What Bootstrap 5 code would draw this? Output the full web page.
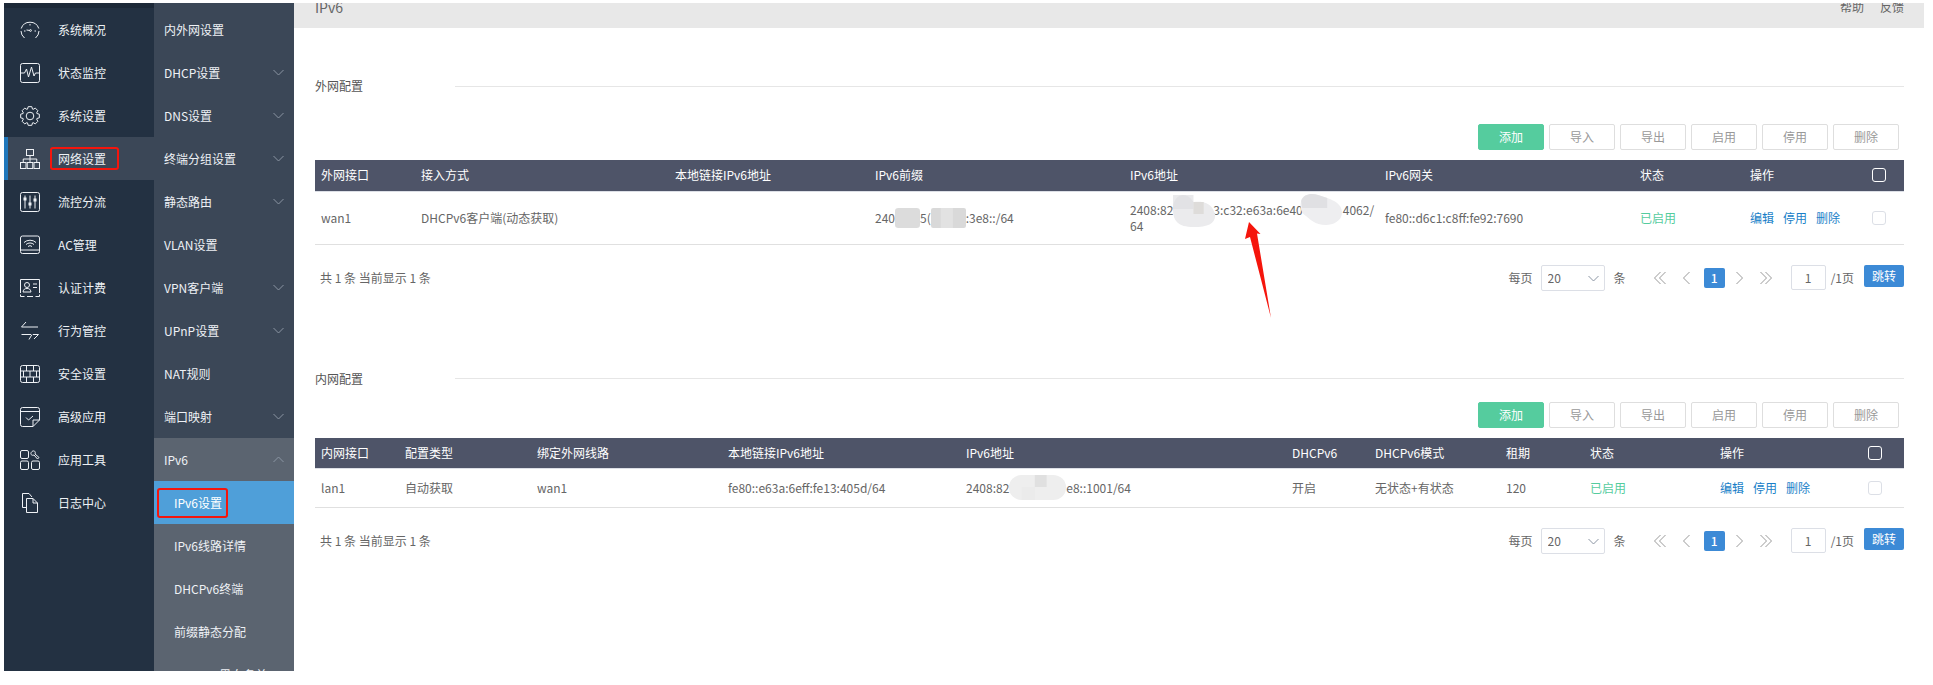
<!DOCTYPE html>
<html lang="zh-CN">
<head>
  <meta charset="UTF-8" />
  <title>IPv6设置</title>
  <link href="https://cdn.jsdelivr.net/npm/bootstrap@5.3.3/dist/css/bootstrap.min.css" rel="stylesheet" />
  <style>
    html, body { height: 685px; overflow: hidden; }
    body { background: #fff; color: #666; font-family: "Noto Sans CJK SC", "Liberation Sans", sans-serif; font-size: 12px; }
    .shell { position: relative; height: 668px; margin: 3px 9px 0 4px; overflow: hidden; }

    /* menus */
    .menu-main { width: 150px; background: #233142; padding-top: 5px; position: relative; }
    .menu-main::before { content: ""; position: absolute; top: 0; left: 0; right: 0; height: 5px; background: #1d2938; }
    .menu-sub { width: 140px; background: #3b4757; padding-top: 5px; }
    .menu-row { height: 43px; color: #eef1f5; font-size: 12px; }
    .menu-main .menu-row { padding-left: 16px; gap: 18px; }
    .menu-main .menu-row.on { background: #3b4757; border-left: 4px solid #1f77bb; padding-left: 12px; }
    .menu-ico { width: 20px; height: 20px; fill: none; stroke: #eef1f5; stroke-width: 1; flex: none; }
    .menu-sub .menu-row { padding: 0 10px 0 10px; }
    .menu-sub .open-head { background: #5b6470; }
    .menu-sub .nested { background: #5b6470; padding-left: 20px; }
    .menu-sub .nested.on { background: #4f9fd9; color: #fff; }
    .chev { width: 11px; height: 7px; fill: none; stroke: #8b95a3; stroke-width: 1; }

    /* content */
    .content { flex: 1; min-width: 0; }
    .top-strip { height: 25px; background: #e8e8e8; padding: 0 20px 0 21px; overflow: hidden; }
    .page-name { font-size: 14px; line-height: 8px; color: #666; }
    .top-links { line-height: 8px; gap: 16px; }
    .pane { padding: 0 20px 0 21px; }
    .sec-head { height: 20px; color: #555; }
    .sec-name { width: 140px; margin-top: -2px; }
    .sec-line { flex: 1; height: 1px; background: #e6e6e6; margin-top: -2px; }
    .sec-a { margin-top: 49px; }
    .sec-b { margin-top: 79px; }
    .tools { gap: 5px; padding-right: 5px; height: 26px; }
    .tools-a { margin-top: 27px; }
    .tools-b { margin-top: 12px; }
    .tool-btn { width: 66px; height: 26px; padding: 0; font-size: 12px; line-height: 24px; border: 1px solid #dedede; border-radius: 2px; background: #fff; color: #999; }
    .tool-btn.go { background: #55cc9e; border-color: #55cc9e; color: #fff; }

    .net-table { table-layout: fixed; width: 1589px; margin: 10px 0 0; font-size: 12px; }
    .net-table th { height: 31px; background: #4e5468; color: #fff; font-weight: 400; padding: 0 6px; vertical-align: middle; border-bottom: 1px solid #dcdfe6; }
    .net-table td { color: #666; padding: 0 6px; vertical-align: middle; border-bottom: 1px solid #e0e0e0; line-height: 16px; white-space: nowrap; }
    .net-table td.state-on { color: #55cc9e; }
    .wan-grid td { height: 53px; }
    .lan-grid td { height: 39px; }
    .wan-grid col:nth-child(1) { width: 100px; }
    .wan-grid col:nth-child(2) { width: 254px; }
    .wan-grid col:nth-child(3) { width: 200px; }
    .wan-grid col:nth-child(4) { width: 255px; }
    .wan-grid col:nth-child(5) { width: 255px; }
    .wan-grid col:nth-child(6) { width: 255px; }
    .wan-grid col:nth-child(7) { width: 110px; }
    .wan-grid col:nth-child(8) { width: 122px; }
    .wan-grid col:nth-child(9) { width: 38px; }
    .lan-grid col:nth-child(1) { width: 84px; }
    .lan-grid col:nth-child(2) { width: 132px; }
    .lan-grid col:nth-child(3) { width: 191px; }
    .lan-grid col:nth-child(4) { width: 238px; }
    .lan-grid col:nth-child(5) { width: 326px; }
    .lan-grid col:nth-child(6) { width: 83px; }
    .lan-grid col:nth-child(7) { width: 131px; }
    .lan-grid col:nth-child(8) { width: 84px; }
    .lan-grid col:nth-child(9) { width: 130px; }
    .lan-grid col:nth-child(10) { width: 148px; }
    .lan-grid col:nth-child(11) { width: 42px; }
    .act-link { color: #1a7fc8; text-decoration: none; margin-right: 9px; }
    .tick { width: 14px; height: 14px; margin: 0; display: block; border: 1px solid #dcdfe6; border-radius: 2px; background: #fff; }
    th .tick { background: transparent; border-color: #fff; }

    /* blurred bits of the addresses */
    .smudge { display: inline-block; position: relative; height: 1px; }
    .smudge svg { position: absolute; left: 0; }
    .gap-a { width: 25px; }
    .gap-a2 { width: 35px; }
    .gap-b { width: 40px; }
    .gap-c { width: 40px; }
    .gap-d { width: 57px; }
    .blot-a { width: 25px; height: 20px; top: -14px; }
    .blot-a2 { width: 35px; height: 20px; top: -14px; }
    .blot-b { width: 43px; height: 32px; top: -19px; }
    .smudge .blot-c { width: 43px; height: 32px; top: -20px; left: -3px; }
    .blot-d { width: 57px; height: 25px; top: -17px; }

    .pager { height: 26px; margin-top: 20px; padding-left: 5px; }
    .pager-tools { color: #666; }
    .size-pick { width: 64px; height: 26px; padding: 0 0 0 6px; font-size: 12px; color: #666; border: 1px solid #dcdfe6; border-radius: 2px; background-image: none; }
    .pick-wrap { position: relative; margin: 0 9px 0 8px; }
    .pick-wrap svg { position: absolute; right: 6px; top: 10px; }
    .pg-ico { fill: none; stroke: #999; stroke-width: 1; height: 14px; }
    .pg-now { width: 21px; height: 20px; line-height: 20px; text-align: center; background: #3c8ad6; color: #fff; border-radius: 2px; margin: 0 11px 0 14px; font-weight: 500; }
    .pg-input { width: 35px; height: 25px; padding: 0; text-align: center; font-size: 12px; color: #666; border: 1px solid #dcdfe6; border-radius: 2px; margin: 0 5px 1px 19px; }
    .jump-btn { width: 40px; height: 22px; padding: 0; margin: 0 0 4px 10px; font-size: 12px; line-height: 22px; background: #3c8ad6; color: #fff; border: 0; border-radius: 2px; }

    /* annotations drawn over the screenshot */
    .mark-box { position: absolute; border: 2.5px solid #f5150c; border-radius: 3px; }
    .mark-net { left: 46px; top: 144px; width: 69px; height: 23px; }
    .mark-v6 { left: 153px; top: 485px; width: 71px; height: 30px; }
    .mark-arrow { position: absolute; left: 1237px; top: 216px; width: 40px; height: 104px; }
  </style>
</head>
<body>
  <div class="shell d-flex">
    <nav class="menu-main flex-shrink-0">
      <div class="menu-row d-flex align-items-center">
        <svg class="menu-ico" viewBox="0 0 20 20"><path d="M4.500 18A9.300 9.300 0 0 1 1 11M1.200 8.500A9.300 9.300 0 0 1 18.800 8.500M19 11A9.300 9.300 0 0 1 15.500 18"/><path d="M10 4v1.500M4 11h1.500M14.500 11H16M10 10.500 6.500 10"/><circle cx="10.500" cy="10.500" r=".9"/></svg>
        <span>系统概况</span>
      </div>
      <div class="menu-row d-flex align-items-center">
        <svg class="menu-ico" viewBox="0 0 20 20"><rect x=".5" y=".5" width="19" height="19" rx="2"/><path d="M1 10h3.500L6.500 6l2 8 3-10 2.500 9 1.500-3H19"/></svg>
        <span>状态监控</span>
      </div>
      <div class="menu-row d-flex align-items-center">
        <svg class="menu-ico" viewBox="-10 -10 20 20"><polygon points="6.86,-2.5 9.33,-1.81 9.33,1.81 6.86,2.5 6.62,3.08 7.88,5.32 5.32,7.88 3.08,6.62 2.5,6.86 1.81,9.33 -1.81,9.33 -2.5,6.86 -3.08,6.62 -5.32,7.88 -7.88,5.32 -6.62,3.08 -6.86,2.5 -9.33,1.81 -9.33,-1.81 -6.86,-2.5 -6.62,-3.08 -7.88,-5.32 -5.32,-7.88 -3.08,-6.62 -2.5,-6.86 -1.81,-9.33 1.81,-9.33 2.5,-6.86 3.08,-6.62 5.32,-7.88 7.88,-5.32 6.62,-3.08"/><circle r="3.800"/></svg>
        <span>系统设置</span>
      </div>
      <div class="menu-row on d-flex align-items-center">
        <svg class="menu-ico" viewBox="0 0 20 20"><rect x="6.500" y=".5" width="7" height="6"/><rect x=".5" y="13.500" width="5.500" height="6"/><rect x="7.250" y="13.500" width="5.500" height="6"/><rect x="14" y="13.500" width="5.500" height="6"/><path d="M10 6.500v7M3.250 13.500V10h13.500v3.500"/></svg>
        <span>网络设置</span>
      </div>
      <div class="menu-row d-flex align-items-center">
        <svg class="menu-ico" viewBox="0 0 20 20"><rect x=".5" y=".5" width="19" height="19" rx="2"/><path d="M5 3.500v13M10 3.500v13M15 3.500v13"/><path d="M3.500 7h3M8.500 12h3M13.500 8h3" stroke-width="3"/></svg>
        <span>流控分流</span>
      </div>
      <div class="menu-row d-flex align-items-center">
        <svg class="menu-ico" viewBox="0 0 20 20"><rect x=".5" y="1" width="19" height="17.500" rx="2"/><path d="M1 15h18M4 7.500a9 9 0 0 1 12 0M6 9.500a6 6 0 0 1 8 0M8 11.500a3 3 0 0 1 4 0"/></svg>
        <span>AC管理</span>
      </div>
      <div class="menu-row d-flex align-items-center">
        <svg class="menu-ico" viewBox="0 0 20 20"><path d="M.5 15V1.500h19V15M.5 16.500v2h4M7 18.500h6M15.500 18.500h4v-2"/><circle cx="7" cy="7" r="2.500"/><path d="M3 14c.5-3 2-3.500 4-3.500s3.500.5 4 3.500zM13 6h4M13 9.500h4"/></svg>
        <span>认证计费</span>
      </div>
      <div class="menu-row d-flex align-items-center">
        <svg class="menu-ico" viewBox="0 0 20 20"><path d="M6 1 1.500 6H18M1.500 13.500H11M13 13.500h5.500L14 18M9 18.500l3-5"/></svg>
        <span>行为管控</span>
      </div>
      <div class="menu-row d-flex align-items-center">
        <svg class="menu-ico" viewBox="0 0 20 20"><rect x=".5" y="1.500" width="19" height="17" rx="2"/><path d="M.5 7h19M.5 13h19M6.500 1.500V7M13.500 1.500V7M3.500 7v6M10 7v6M16.500 7v6M6.500 13v5.500M13.500 13v5.500"/></svg>
        <span>安全设置</span>
      </div>
      <div class="menu-row d-flex align-items-center">
        <svg class="menu-ico" viewBox="0 0 20 20"><path d="M13 19.500H2.500a2 2 0 0 1-2-2V2.500a2 2 0 0 1 2-2h15a2 2 0 0 1 2 2V13zM.5 4.500h19M13 19.500V13h6.500M6 10.500l2.500 2.500 4.500-4"/></svg>
        <span>高级应用</span>
      </div>
      <div class="menu-row d-flex align-items-center">
        <svg class="menu-ico" viewBox="0 0 20 20"><rect x=".5" y=".5" width="8" height="8" rx="1.500"/><rect x=".5" y="11" width="8" height="8.500" rx="1.500"/><rect x="11.500" y="11" width="8" height="8.500" rx="1.500"/><path d="M12 1.500c2-1.500 4 0 3 2.500l4 3.500-1.500 1.500-3.500-4c-2.500 1-4-1-2.500-3z"/></svg>
        <span>应用工具</span>
      </div>
      <div class="menu-row d-flex align-items-center">
        <svg class="menu-ico" viewBox="0 0 20 20"><path d="M7 14.500H2.500V.5H9l3 3.500M6.500 19.500V5.500H13l4.500 4.500v9.500zM13 5.500V10h4.500"/></svg>
        <span>日志中心</span>
      </div>
    </nav>

    <nav class="menu-sub flex-shrink-0">
      <div class="menu-row d-flex align-items-center"><span>内外网设置</span></div>
      <div class="menu-row d-flex align-items-center justify-content-between"><span>DHCP设置</span><svg class="chev" viewBox="0 0 11 7"><path d="m.5 1 5 5 5-5"/></svg></div>
      <div class="menu-row d-flex align-items-center justify-content-between"><span>DNS设置</span><svg class="chev" viewBox="0 0 11 7"><path d="m.5 1 5 5 5-5"/></svg></div>
      <div class="menu-row d-flex align-items-center justify-content-between"><span>终端分组设置</span><svg class="chev" viewBox="0 0 11 7"><path d="m.5 1 5 5 5-5"/></svg></div>
      <div class="menu-row d-flex align-items-center justify-content-between"><span>静态路由</span><svg class="chev" viewBox="0 0 11 7"><path d="m.5 1 5 5 5-5"/></svg></div>
      <div class="menu-row d-flex align-items-center"><span>VLAN设置</span></div>
      <div class="menu-row d-flex align-items-center justify-content-between"><span>VPN客户端</span><svg class="chev" viewBox="0 0 11 7"><path d="m.5 1 5 5 5-5"/></svg></div>
      <div class="menu-row d-flex align-items-center justify-content-between"><span>UPnP设置</span><svg class="chev" viewBox="0 0 11 7"><path d="m.5 1 5 5 5-5"/></svg></div>
      <div class="menu-row d-flex align-items-center"><span>NAT规则</span></div>
      <div class="menu-row d-flex align-items-center justify-content-between"><span>端口映射</span><svg class="chev" viewBox="0 0 11 7"><path d="m.5 1 5 5 5-5"/></svg></div>
      <div class="menu-row open-head d-flex align-items-center justify-content-between"><span>IPv6</span><svg class="chev" viewBox="0 0 11 7"><path d="m.5 6 5-5 5 5"/></svg></div>
      <div class="menu-row nested on d-flex align-items-center"><span>IPv6设置</span></div>
      <div class="menu-row nested d-flex align-items-center"><span>IPv6线路详情</span></div>
      <div class="menu-row nested d-flex align-items-center"><span>DHCPv6终端</span></div>
      <div class="menu-row nested d-flex align-items-center"><span>前缀静态分配</span></div>
      <div class="menu-row nested d-flex align-items-center"><span>DHCPv6黑白名单</span></div>
    </nav>

    <main class="content">
      <div class="top-strip d-flex justify-content-between">
        <span class="page-name">IPv6</span>
        <div class="top-links d-flex"><span>帮助</span><span>反馈</span></div>
      </div>

      <div class="pane">
        <div class="sec-head sec-a d-flex align-items-center">
          <span class="sec-name">外网配置</span><span class="sec-line"></span>
        </div>
        <div class="tools tools-a d-flex justify-content-end">
          <button class="btn tool-btn go">添加</button>
          <button class="btn tool-btn">导入</button>
          <button class="btn tool-btn">导出</button>
          <button class="btn tool-btn">启用</button>
          <button class="btn tool-btn">停用</button>
          <button class="btn tool-btn">删除</button>
        </div>
        <table class="table net-table wan-grid">
          <colgroup><col><col><col><col><col><col><col><col><col></colgroup>
          <thead>
            <tr><th>外网接口</th><th>接入方式</th><th>本地链接IPv6地址</th><th>IPv6前缀</th><th>IPv6地址</th><th>IPv6网关</th><th>状态</th><th>操作</th><th><input type="checkbox" class="form-check-input tick"></th></tr>
          </thead>
          <tbody>
            <tr>
              <td>wan1</td>
              <td>DHCPv6客户端(动态获取)</td>
              <td></td>
              <td>240<span class="smudge gap-a"><svg class="blot-a" viewBox="0 0 22 20" preserveAspectRatio="none"><rect width="22" height="20" rx="3" fill="#dcdcdc"/></svg></span>5(<span class="smudge gap-a2"><svg class="blot-a2" viewBox="0 0 32 20" preserveAspectRatio="none"><rect width="32" height="20" rx="2" fill="#d9d9d9"/><rect x="9" width="11" height="20" fill="#e2e2e2"/></svg></span>:3e8::/64</td>
              <td>2408:82<span class="smudge gap-b"><svg class="blot-b" viewBox="0 0 42 32" preserveAspectRatio="none"><path d="M0 14C0 2 8-2 14 1c4 2 5 5 6 6 8-1 18 0 21 12 1 9-6 13-21 13S0 26 0 14z" fill="#ebebed"/><rect x="0" width="20" height="14" fill="#dcdce0" opacity=".6"/><rect x="20" y="7" width="10" height="12" fill="#dedcda"/></svg></span>3:c32:e63a:6e40<span class="smudge gap-c"><svg class="blot-c" viewBox="0 0 38 32" preserveAspectRatio="none"><path d="M1 7C3 0 10-1 16 1c8 3 20 6 21 16 1 10-8 14-14 14-10 0-14-6-19-10C0 17 0 12 1 7z" fill="#eeeef0"/><path d="M1 7C3 0 10-1 16 1l8 3v10H2z" fill="#e0e0e3"/></svg></span>4062/<br>64</td>
              <td>fe80::d6c1:c8ff:fe92:7690</td>
              <td class="state-on">已启用</td>
              <td><a class="act-link" href="#">编辑</a><a class="act-link" href="#">停用</a><a class="act-link" href="#">删除</a></td>
              <td><input type="checkbox" class="form-check-input tick"></td>
            </tr>
          </tbody>
        </table>
        <div class="pager d-flex align-items-center justify-content-between">
          <span>共 1 条 当前显示 1 条</span>
          <div class="pager-tools d-flex align-items-center">
            <span>每页</span>
            <div class="pick-wrap">
              <select class="form-select size-pick"><option>20</option></select>
              <svg class="chev" viewBox="0 0 11 7"><path d="m.5 1 5 5 5-5"/></svg>
            </div>
            <span class="me-4 pe-1">条</span>
            <svg class="pg-ico" width="12" viewBox="0 0 12 14"><path d="M6.500 1 .5 7l6 6M11.500 1l-6 6 6 6"/></svg>
            <svg class="pg-ico ms-3" width="8" viewBox="0 0 8 14"><path d="M7.500 1l-6 6 6 6"/></svg>
            <span class="pg-now">1</span>
            <svg class="pg-ico" width="8" viewBox="0 0 8 14"><path d="m.5 1 6 6-6 6"/></svg>
            <svg class="pg-ico ms-3" width="12" viewBox="0 0 12 14"><path d="m.5 1 6 6-6 6M5.500 1l6 6-6 6"/></svg>
            <input class="form-control pg-input" value="1">
            <span>/1页</span>
            <button class="btn jump-btn">跳转</button>
          </div>
        </div>

        <div class="sec-head sec-b d-flex align-items-center">
          <span class="sec-name">内网配置</span><span class="sec-line"></span>
        </div>
        <div class="tools tools-b d-flex justify-content-end">
          <button class="btn tool-btn go">添加</button>
          <button class="btn tool-btn">导入</button>
          <button class="btn tool-btn">导出</button>
          <button class="btn tool-btn">启用</button>
          <button class="btn tool-btn">停用</button>
          <button class="btn tool-btn">删除</button>
        </div>
        <table class="table net-table lan-grid">
          <colgroup><col><col><col><col><col><col><col><col><col><col><col></colgroup>
          <thead>
            <tr><th>内网接口</th><th>配置类型</th><th>绑定外网线路</th><th>本地链接IPv6地址</th><th>IPv6地址</th><th>DHCPv6</th><th>DHCPv6模式</th><th>租期</th><th>状态</th><th>操作</th><th><input type="checkbox" class="form-check-input tick"></th></tr>
          </thead>
          <tbody>
            <tr>
              <td>lan1</td>
              <td>自动获取</td>
              <td>wan1</td>
              <td>fe80::e63a:6eff:fe13:405d/64</td>
              <td>2408:82<span class="smudge gap-d"><svg class="blot-d" viewBox="0 0 53 25" preserveAspectRatio="none"><rect width="53" height="25" rx="12" fill="#eeeeee"/><rect x="24" width="11" height="12" fill="#e0e0e0"/><rect x="12" y="12" width="12" height="13" fill="#ebebeb"/></svg></span>e8::1001/64</td>
              <td>开启</td>
              <td>无状态+有状态</td>
              <td>120</td>
              <td class="state-on">已启用</td>
              <td><a class="act-link" href="#">编辑</a><a class="act-link" href="#">停用</a><a class="act-link" href="#">删除</a></td>
              <td><input type="checkbox" class="form-check-input tick"></td>
            </tr>
          </tbody>
        </table>
        <div class="pager d-flex align-items-center justify-content-between">
          <span>共 1 条 当前显示 1 条</span>
          <div class="pager-tools d-flex align-items-center">
            <span>每页</span>
            <div class="pick-wrap">
              <select class="form-select size-pick"><option>20</option></select>
              <svg class="chev" viewBox="0 0 11 7"><path d="m.5 1 5 5 5-5"/></svg>
            </div>
            <span class="me-4 pe-1">条</span>
            <svg class="pg-ico" width="12" viewBox="0 0 12 14"><path d="M6.500 1 .5 7l6 6M11.500 1l-6 6 6 6"/></svg>
            <svg class="pg-ico ms-3" width="8" viewBox="0 0 8 14"><path d="M7.500 1l-6 6 6 6"/></svg>
            <span class="pg-now">1</span>
            <svg class="pg-ico" width="8" viewBox="0 0 8 14"><path d="m.5 1 6 6-6 6"/></svg>
            <svg class="pg-ico ms-3" width="12" viewBox="0 0 12 14"><path d="m.5 1 6 6-6 6M5.500 1l6 6-6 6"/></svg>
            <input class="form-control pg-input" value="1">
            <span>/1页</span>
            <button class="btn jump-btn">跳转</button>
          </div>
        </div>
      </div>
    </main>

    <div class="mark-box mark-net"></div>
    <div class="mark-box mark-v6"></div>
    <svg class="mark-arrow" viewBox="0 0 40 104"><polygon points="8,3 19.500,15 16,14.500 30,99 9,18 4,20" fill="#f5150c"/></svg>
  </div>
</body>
</html>
